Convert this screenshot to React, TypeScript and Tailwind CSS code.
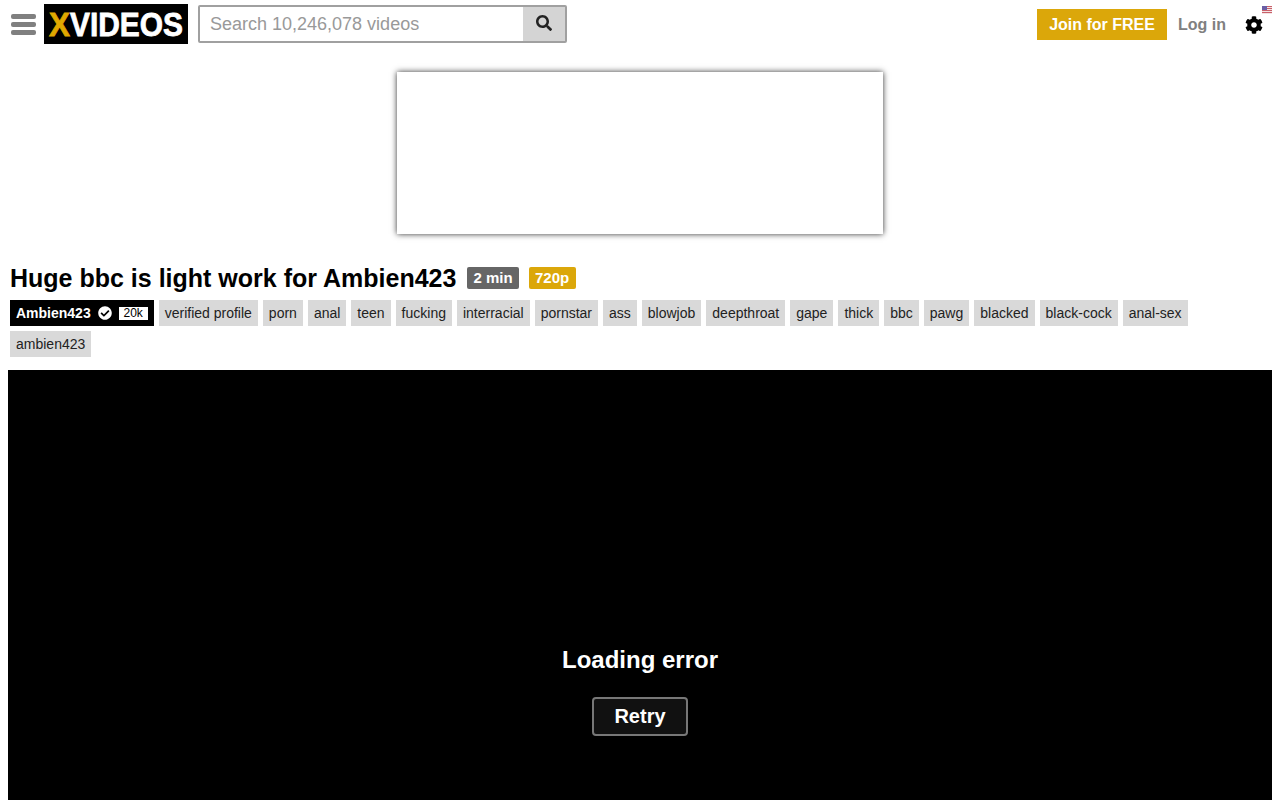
import React from "react";
import { FaSearch, FaCog, FaCheckCircle } from "react-icons/fa";

const tags = ["verified profile","porn","anal","teen","fucking","interracial","pornstar","ass","blowjob","deepthroat","gape","thick","bbc","pawg","blacked","black-cock","anal-sex","ambien423"];

function Logo() {
  return (
    <div className="w-[144px] h-[40px] bg-black shrink-0">
      <svg width="144" height="40" viewBox="0 0 144 40">
        <text x="5" y="32" fontFamily="'Liberation Sans', sans-serif" fontWeight="700" fontSize="34" fill="#e0a800" stroke="#e0a800" strokeWidth="0.8" textLength="21" lengthAdjust="spacingAndGlyphs">X</text>
        <text x="26" y="32" fontFamily="'Liberation Sans', sans-serif" fontWeight="700" fontSize="34" fill="#ffffff" stroke="#ffffff" strokeWidth="0.8" textLength="113" lengthAdjust="spacingAndGlyphs">VIDEOS</text>
      </svg>
    </div>
  );
}

function Flag() {
  return (
    <svg width="10" height="8" viewBox="0 0 10 8" className="absolute right-[8px] top-[6px]">
      <rect width="10" height="8" fill="#f3e4e4" />
      <rect y="0" width="10" height="1" fill="#c9606a" />
      <rect y="2" width="10" height="1" fill="#c9606a" />
      <rect y="4" width="10" height="1" fill="#c9606a" />
      <rect y="6" width="10" height="1" fill="#c9606a" />
      <rect width="5" height="4" fill="#6a5fa5" />
    </svg>
  );
}

export default function App() {
  return (
    <div className="h-[800px] overflow-hidden bg-white font-['Liberation_Sans',Arial,sans-serif] text-black">
      <header className="relative flex items-center h-[48px] pl-[11px] pr-[17px]">
        <div className="flex flex-col gap-[3px] w-[25px] mr-[8px]">
          <span className="h-[5px] rounded-[2px] bg-[#808080]" />
          <span className="h-[5px] rounded-[2px] bg-[#808080]" />
          <span className="h-[5px] rounded-[2px] bg-[#808080]" />
        </div>
        <Logo />
        <div className="flex ml-[10px] w-[369px] h-[38px] border-2 border-[#a0a0a0] rounded-[2px]">
          <div className="flex-1 flex items-center pl-[10px] text-[18px] text-[#999999]">Search 10,246,078 videos</div>
          <div className="flex items-center justify-center w-[42px] bg-[#d4d4d4] text-[#222222]">
            <FaSearch size={16} className="-mt-[3px]" />
          </div>
        </div>
        <div className="ml-auto flex items-center">
          <div className="flex items-center justify-center h-[31px] w-[130px] bg-[#dba70a] text-white font-bold text-[16px] pt-[1px]">Join for FREE</div>
          <div className="ml-[11px] text-[#808080] font-bold text-[16px] pt-[1px]">Log in</div>
          <FaCog size={18} className="ml-[19px] text-black mt-[1px]" />
        </div>
        <Flag />
      </header>

      <div className="flex justify-center pt-[24px]">
        <div className="w-[486px] h-[162px] bg-white shadow-[0_0_6px_rgba(0,0,0,0.8)]" />
      </div>

      <div className="flex items-center mt-[29px] pl-[10px] h-[30px]">
        <h1 className="text-[25px] font-bold leading-[30px]">Huge bbc is light work for Ambien423</h1>
        <span className="ml-[11px] h-[22px] px-[6px] flex items-center rounded-[2px] bg-[#666666] text-white font-bold text-[15px]">2 min</span>
        <span className="ml-[10px] h-[22px] w-[47px] flex items-center justify-center rounded-[2px] bg-[#dba70a] text-white font-bold text-[15px]">720p</span>
      </div>

      <div className="flex flex-wrap gap-x-[5px] gap-y-[5px] mt-[7px] px-[10px] text-[14px]">
        <div className="flex items-center h-[26px] pl-[6px] pr-[6px] bg-black text-white font-bold">
          Ambien423
          <FaCheckCircle size={14} className="ml-[7px]" />
          <span className="ml-[7px] w-[29px] h-[13px] flex items-center justify-center bg-white text-black font-normal text-[12px]">20k</span>
        </div>
        {tags.map((t) => (
          <div key={t} className="flex items-center h-[26px] px-[6px] bg-[#d9d9d9] text-[#222222]">{t}</div>
        ))}
      </div>

      <div className="mx-[8px] mt-[13px] h-[711px] bg-black flex flex-col items-center pt-[273px]">
        <div className="text-white font-bold text-[24px] leading-[34px]">Loading error</div>
        <div className="mt-[20px] flex items-center justify-center w-[96px] h-[39px] pb-[2px] rounded-[4px] border-2 border-[#777777] bg-[#111111] text-white font-bold text-[20px]">Retry</div>
      </div>
    </div>
  );
}
